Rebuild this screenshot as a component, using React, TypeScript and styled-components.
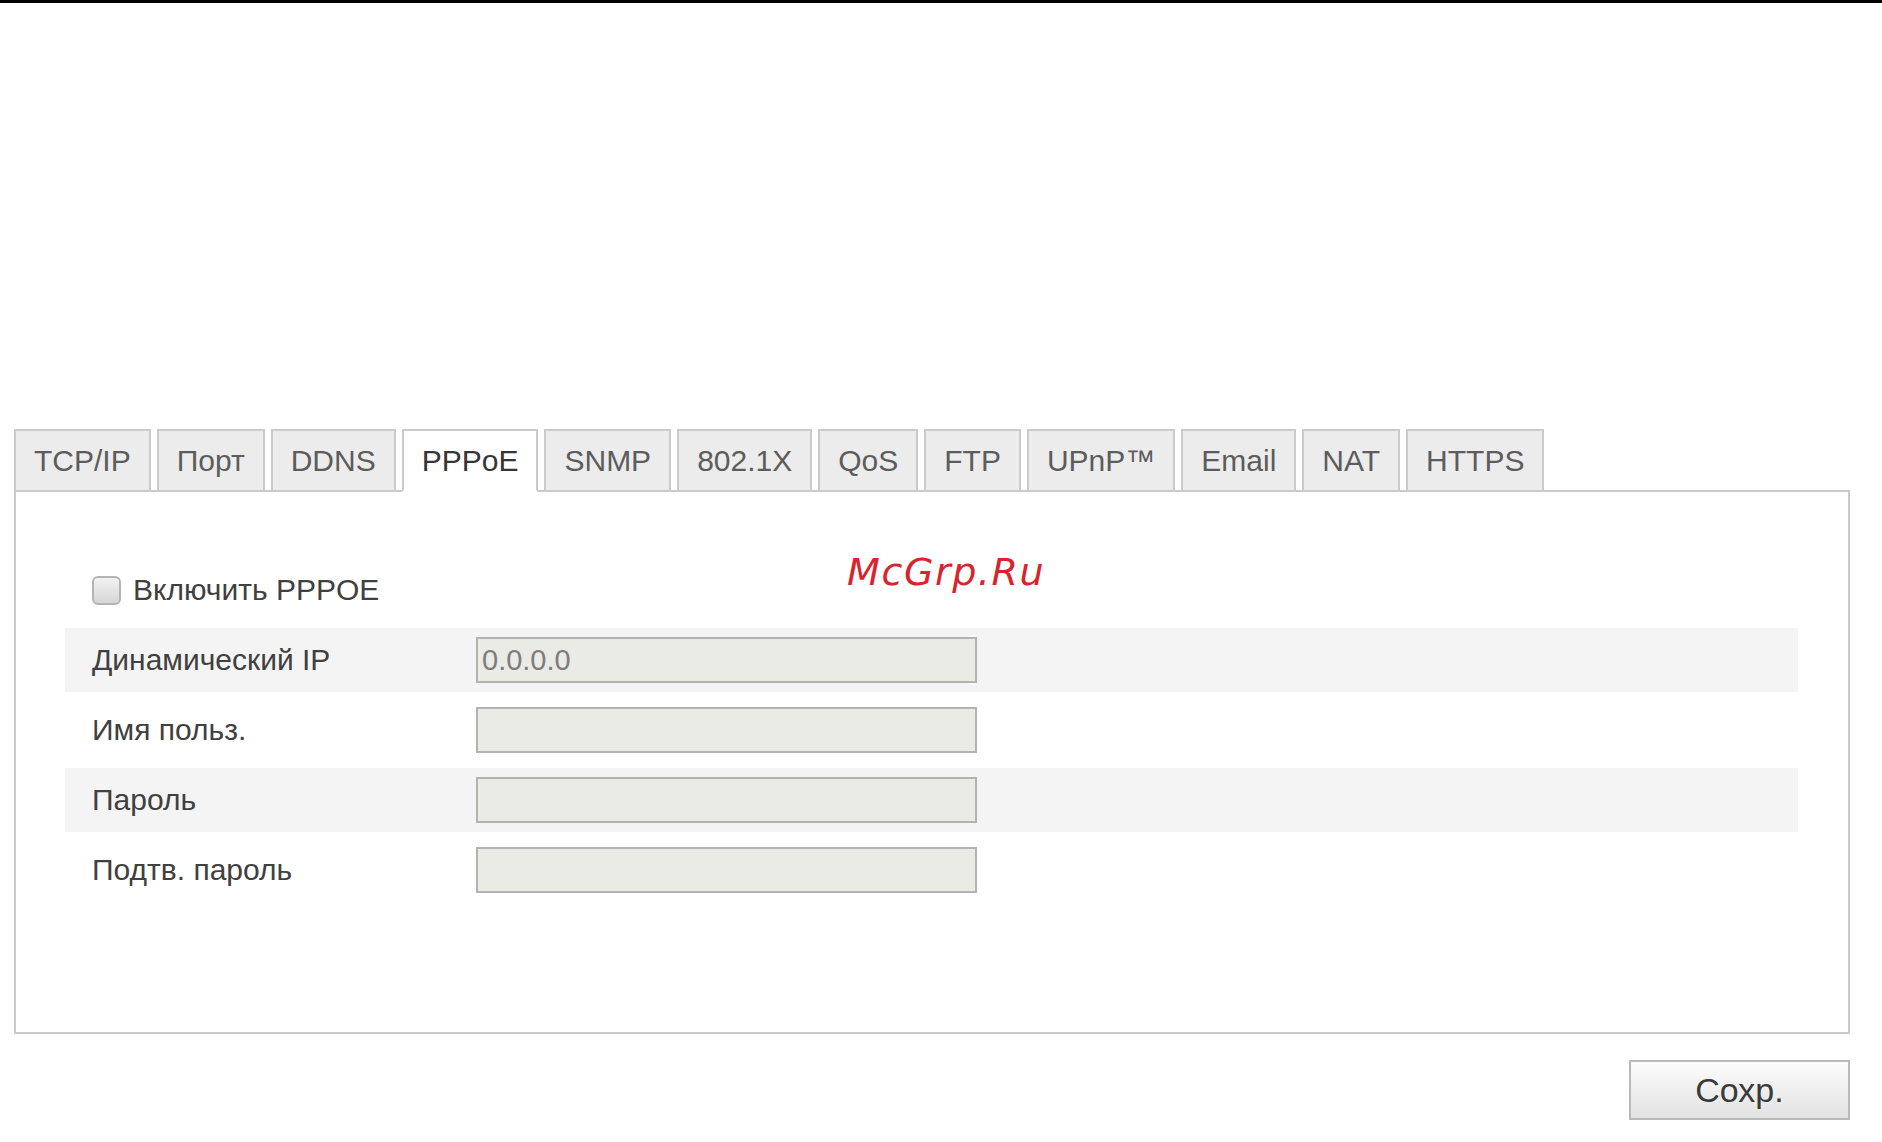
import React, { useState } from 'react';
import styled, { createGlobalStyle } from 'styled-components';

const GlobalStyle = createGlobalStyle`
  body {
    margin: 0;
    background: #ffffff;
    font-family: 'Liberation Sans', Arial, sans-serif;
  }
`;

const TopRule = styled.div`
  height: 3px;
  background: #000000;
`;

const Page = styled.div`
  padding: 426px 32px 0 14px;
`;

const TabBar = styled.div`
  display: flex;
  align-items: flex-start;
  gap: 6px;
  margin-bottom: -2px;
  position: relative;
  z-index: 1;
`;

const Tab = styled.button<{ $active?: boolean }>`
  box-sizing: border-box;
  height: 63px;
  padding: 0 18px;
  border: 2px solid #cacaca;
  border-bottom-color: ${(p) => (p.$active ? '#ffffff' : '#cacaca')};
  background: ${(p) => (p.$active ? '#ffffff' : '#ececec')};
  color: ${(p) => (p.$active ? '#363636' : '#5c5c5c')};
  font-family: 'Liberation Sans', Arial, sans-serif;
  font-size: 30px;
  cursor: pointer;
`;

const Panel = styled.div`
  position: relative;
  box-sizing: border-box;
  height: 544px;
  border: 2px solid #cacaca;
  padding: 66px 50px 0 49px;
`;

const Watermark = styled.div`
  position: absolute;
  left: 831px;
  top: 61px;
  font-family: 'DejaVu Sans', sans-serif;
  font-style: oblique;
  font-size: 38px;
  line-height: 1;
  letter-spacing: 1.6px;
  color: #d8242b;
`;

const CheckRow = styled.label`
  display: flex;
  align-items: center;
  height: 64px;
  padding-left: 27px;
  font-size: 30px;
  color: #404040;
`;

const Check = styled.span<{ $on: boolean }>`
  box-sizing: border-box;
  width: 29px;
  height: 29px;
  margin-right: 12px;
  border: 2px solid #b4b4b4;
  border-radius: 6px;
  background: linear-gradient(#f2f2f2, #d6d6d6);
  display: flex;
  align-items: center;
  justify-content: center;
  color: #333;
  font-size: 20px;
`;

const Row = styled.div<{ $shaded: boolean }>`
  display: flex;
  align-items: center;
  height: 64px;
  margin-top: 6px;
  background: ${(p) => (p.$shaded ? '#f4f4f4' : 'transparent')};
`;

const Label = styled.div`
  width: 411px;
  padding-left: 27px;
  box-sizing: border-box;
  font-size: 30px;
  color: #404040;
`;

const Field = styled.input`
  box-sizing: border-box;
  width: 501px;
  height: 46px;
  border: 2px solid #b2b2b2;
  background: #ebebe6;
  padding: 0 4px;
  font-family: 'Liberation Sans', Arial, sans-serif;
  font-size: 29px;
  color: #7c7c7c;
  outline: none;
`;

const Footer = styled.div`
  display: flex;
  justify-content: flex-end;
  padding-top: 26px;
`;

const SaveButton = styled.button`
  width: 221px;
  height: 60px;
  border: 2px solid #b9b9b9;
  background: linear-gradient(#fcfcfc, #e2e2e2);
  font-family: 'Liberation Sans', Arial, sans-serif;
  font-size: 34px;
  color: #3a3a3a;
  cursor: pointer;
`;

const tabs = ['TCP/IP', 'Порт', 'DDNS', 'PPPoE', 'SNMP', '802.1X', 'QoS', 'FTP', 'UPnP™', 'Email', 'NAT', 'HTTPS'];

const fields = [
  { label: 'Динамический IP', value: '0.0.0.0', type: 'text' },
  { label: 'Имя польз.', value: '', type: 'text' },
  { label: 'Пароль', value: '', type: 'password' },
  { label: 'Подтв. пароль', value: '', type: 'password' },
];

const App: React.FC = () => {
  const [activeTab, setActiveTab] = useState('PPPoE');
  const [enabled, setEnabled] = useState(false);

  return (
    <>
      <GlobalStyle />
      <TopRule />
      <Page>
        <TabBar>
          {tabs.map((t) => (
            <Tab key={t} $active={t === activeTab} onClick={() => setActiveTab(t)}>
              {t}
            </Tab>
          ))}
        </TabBar>
        <Panel>
          <Watermark>McGrp.Ru</Watermark>
          <CheckRow onClick={() => setEnabled(!enabled)}>
            <Check $on={enabled}>{enabled ? '✓' : ''}</Check>
            Включить PPPOE
          </CheckRow>
          {fields.map((f, i) => (
            <Row key={f.label} $shaded={i % 2 === 0}>
              <Label>{f.label}</Label>
              <Field type={f.type} defaultValue={f.value} disabled={!enabled} />
            </Row>
          ))}
        </Panel>
        <Footer>
          <SaveButton>Сохр.</SaveButton>
        </Footer>
      </Page>
    </>
  );
};

export default App;
